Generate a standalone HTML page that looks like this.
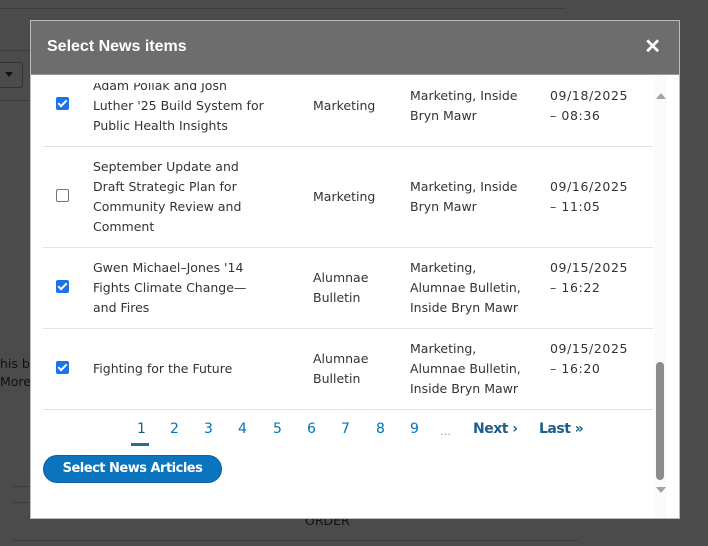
<!DOCTYPE html>
<html><head><meta charset="utf-8"><style>
body{margin:0;width:708px;height:546px;background:#4b4b4b;position:relative;overflow:hidden;font-family:"DejaVu Sans","Liberation Sans",sans-serif;}
.bgl{position:absolute;background:#3c3c3c;height:1px}
.dlg{position:absolute;left:30px;top:20px;width:650px;height:499px;background:#fff;border:1px solid #bbb;box-sizing:border-box;overflow:hidden}
.hd{position:absolute;left:0;top:0;width:100%;height:53px;background:#6d6d6d;border-bottom:1px solid #999}
.hd .t{position:absolute;left:16px;top:17px;color:#fff;font:bold 16px "Liberation Sans",sans-serif}
.hd .x{position:absolute;right:18px;top:13px;color:#fff;font:bold 20px "Liberation Sans",sans-serif}
.a{position:absolute;font-size:12.5px;line-height:20px;color:#333;letter-spacing:0;white-space:nowrap}
.d{letter-spacing:0.6px}
.cb{position:absolute;left:25px;width:13px;height:13px;border-radius:2px;box-sizing:border-box}
.on{background:#1a73e8}
.on::after{content:"";position:absolute;left:4px;top:1px;width:3px;height:7px;border:solid #fff;border-width:0 2px 2px 0;transform:rotate(45deg)}
.off{border:1px solid #767676;background:#fff}
.ln{position:absolute;left:12px;width:610px;height:1px;background:#e4e4e4}
.pg{position:absolute;top:400px;font-size:14px;color:#0074bd;font-family:"DejaVu Sans",sans-serif}
.sb{position:absolute;left:624px;top:54px;width:12px;height:444px;background:#fafafa}
</style></head><body>
<div class="bgl" style="left:0;top:8px;width:566px"></div>
<div class="bgl" style="left:0;top:50px;width:30px"></div>
<div class="bgl" style="left:0;top:100px;width:30px"></div>
<div class="bgl" style="left:12px;top:486px;width:18px"></div>
<div class="bgl" style="left:12px;top:502px;width:18px"></div>
<div class="bgl" style="left:12px;top:540px;width:566px"></div>
<div style="position:absolute;left:0;top:62px;width:22px;height:24px;border:1px solid #333;border-left:none;border-radius:0 3px 3px 0"></div>
<div style="position:absolute;left:5px;top:72px;border:4px solid transparent;border-top:5px solid #111"></div>
<div class="a" style="left:0;top:354px;color:#111">his b</div>
<div class="a" style="left:0;top:372px;color:#111">More</div>
<div class="a" style="left:305px;top:511px;color:#111">ORDER</div>
<div class="dlg">
 <div class="a" style="left:62px;top:55px">Adam Pollak and Josh</div>
 <div style="position:absolute;left:0;top:52px;width:620px;height:10px;background:#fff"></div>
 <div class="a" style="left:62px;top:75px">Luther '25 Build System for<br>Public Health Insights</div>
 <div class="cb on" style="top:76px"></div>
 <div class="a" style="left:282px;top:75px">Marketing</div>
 <div class="a" style="left:379px;top:65px">Marketing, Inside<br>Bryn Mawr</div>
 <div class="a d" style="left:519px;top:65px">09/18/2025<br>– 08:36</div>
 <div class="hd"><div class="t">Select News items</div><div class="x">✕</div></div>
 <div class="ln" style="top:125px"></div>
 <div class="cb off" style="top:168px"></div>
 <div class="a" style="left:62px;top:136px">September Update and<br>Draft Strategic Plan for<br>Community Review and<br>Comment</div>
 <div class="a" style="left:282px;top:166px">Marketing</div>
 <div class="a" style="left:379px;top:156px">Marketing, Inside<br>Bryn Mawr</div>
 <div class="a d" style="left:519px;top:156px">09/16/2025<br>– 11:05</div>
 <div class="ln" style="top:226px"></div>
 <div class="cb on" style="top:259px"></div>
 <div class="a" style="left:62px;top:237px">Gwen Michael–Jones '14<br>Fights Climate Change—<br>and Fires</div>
 <div class="a" style="left:282px;top:247px">Alumnae<br>Bulletin</div>
 <div class="a" style="left:379px;top:237px">Marketing,<br>Alumnae Bulletin,<br>Inside Bryn Mawr</div>
 <div class="a d" style="left:519px;top:237px">09/15/2025<br>– 16:22</div>
 <div class="ln" style="top:307px"></div>
 <div class="cb on" style="top:340px"></div>
 <div class="a" style="left:62px;top:338px">Fighting for the Future</div>
 <div class="a" style="left:282px;top:328px">Alumnae<br>Bulletin</div>
 <div class="a" style="left:379px;top:318px">Marketing,<br>Alumnae Bulletin,<br>Inside Bryn Mawr</div>
 <div class="a d" style="left:519px;top:318px">09/15/2025<br>– 16:20</div>
 <div class="ln" style="top:388px"></div>
 <div class="pg" style="left:106px;color:#1d5e8a">1</div>
 <div style="position:absolute;left:100px;top:422px;width:18px;height:3px;background:#2a6a96"></div>
 <div class="pg" style="left:139px">2</div><div class="pg" style="left:173px">3</div><div class="pg" style="left:207px">4</div><div class="pg" style="left:242px">5</div><div class="pg" style="left:276px">6</div><div class="pg" style="left:310px">7</div><div class="pg" style="left:345px">8</div><div class="pg" style="left:379px">9</div>
 <div class="pg" style="left:409px;color:#999;font-size:11px;top:404px">…</div>
 <div class="pg" style="left:442px;color:#1d5e8a;font-weight:bold;letter-spacing:-0.5px">Next ›</div>
 <div class="pg" style="left:508px;color:#1d5e8a;font-weight:bold;letter-spacing:-0.5px">Last »</div>
 <div style="position:absolute;left:12px;top:434px;width:179px;height:28px;box-sizing:border-box;border-radius:14px;background:#0a74bf;border:1px solid #0d5f9a;color:#fff;font:bold 13px 'DejaVu Sans',sans-serif;text-align:center;line-height:26px;letter-spacing:-0.5px">Select News Articles</div>
 <div class="sb"></div>
 <div style="position:absolute;left:625px;top:72px;border:5px solid transparent;border-bottom:6px solid #a3a3a3;border-top:0"></div>
 <div style="position:absolute;left:625px;top:466px;border:5px solid transparent;border-top:6px solid #a3a3a3;border-bottom:0"></div>
 <div style="position:absolute;left:625px;top:341px;width:8px;height:118px;border-radius:4px;background:#8c8c8c"></div>
</div>
</body></html>
